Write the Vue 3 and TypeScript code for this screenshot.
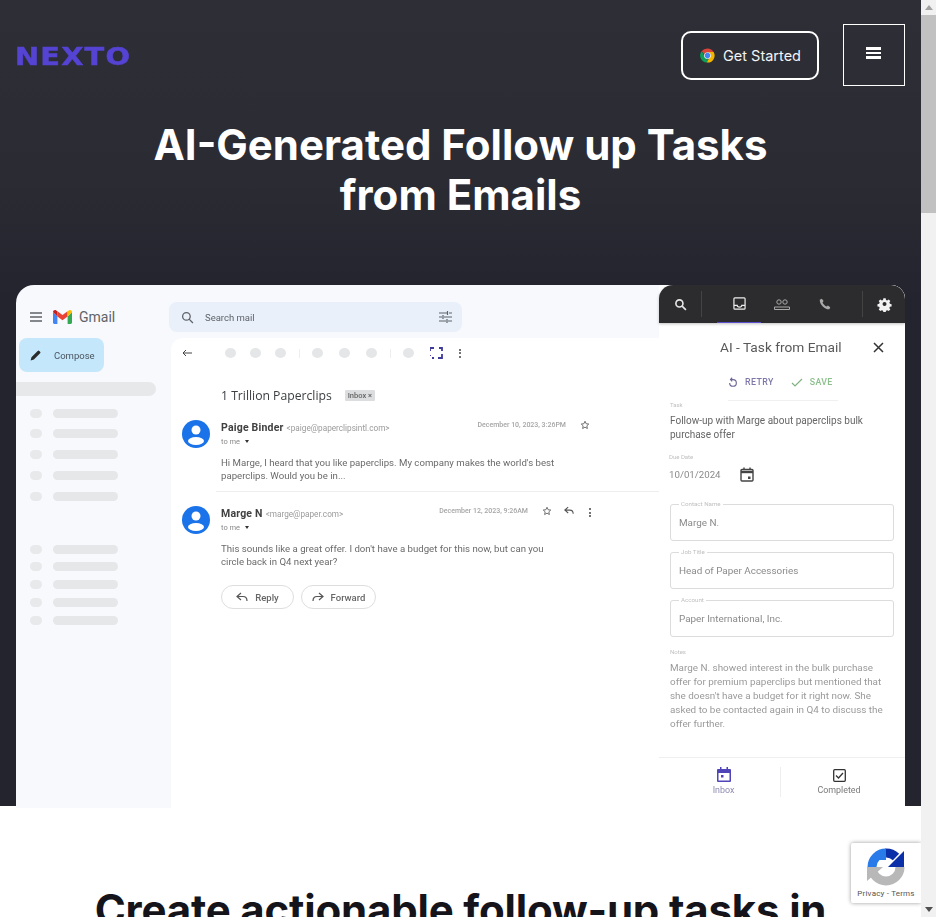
<script setup lang="ts">
const topRows = [0, 1, 2, 3, 4]
const lowerRows = [0, 1, 2, 3, 4]
const fields = [
  { label: 'Contact Name', value: 'Marge N.' },
  { label: 'Job Title', value: 'Head of Paper Accessories' },
  { label: 'Account', value: 'Paper International, Inc.' },
]
const notes = [
  'Marge N. showed interest in the bulk purchase',
  'offer for premium paperclips but mentioned that',
  "she doesn't have a budget for it right now. She",
  'asked to be contacted again in Q4 to discuss the',
  'offer further.',
]
</script>

<template>
  <div class="window">
    <div class="page">
      <section class="hero">
        <header class="nav">
          <span class="logo">NEXTO</span>
          <a class="cta">
            <svg class="chrome" viewBox="0 0 48 48" width="17" height="17">
              <path fill="#db4437" d="M24 4a20 20 0 0 1 17.3 10H24a10 10 0 0 0-9.5 6.9L7.7 11.3A20 20 0 0 1 24 4z" />
              <path fill="#0f9d58" d="M7.7 11.3l8.6 15.4A10 10 0 0 0 28 33.4L21.6 43.9A20 20 0 0 1 7.7 11.3z" />
              <path fill="#f4b400" d="M41.3 14A20 20 0 0 1 21.6 43.9L30.2 29A10 10 0 0 0 31 17l-7-3z" />
              <circle cx="24" cy="24" r="9.5" fill="#fff" />
              <circle cx="24" cy="24" r="7.5" fill="#4285f4" />
            </svg>
            Get Started
          </a>
          <button class="menu" aria-label="Menu"><i></i><i></i><i></i></button>
        </header>
        <h1>AI-Generated Follow up Tasks<br />from Emails</h1>

        <div class="shot">
          <aside class="side">
            <div class="brand">
              <svg width="12" height="10" viewBox="0 0 12 10"><path d="M0 1h12M0 5h12M0 9h12" stroke="#5f6368" stroke-width="1.3" /></svg>
              <svg class="gm" width="19" height="14" viewBox="0 0 19 14">
                <path fill="#4285f4" d="M0 2v10.6c0 .8.6 1.4 1.4 1.4h3V6.5z" />
                <path fill="#34a853" d="M14.6 6.5V14h3c.8 0 1.4-.6 1.4-1.4V2z" />
                <path fill="#ea4335" d="M4.4 6.5V1.2L9.5 5l5.1-3.8v5.3L9.5 10.2z" />
                <path fill="#c5221f" d="M0 2c0-1.6 1.9-2.6 3.2-1.6l1.2.8v5.3z" />
                <path fill="#fbbc04" d="M14.6 1.2l1.2-.8C17.1-.6 19 .4 19 2l-4.4 4.5z" />
              </svg>
              <span>Gmail</span>
            </div>
            <div class="compose">
              <svg width="13" height="13" viewBox="0 0 24 24"><path fill="#2b2b2b" d="M3 21l1.5-6L16 3.5a2.1 2.1 0 0 1 3 0l1.5 1.5a2.1 2.1 0 0 1 0 3L9 19.5z" /></svg>
              <span>Compose</span>
            </div>
            <div class="wide-pill"></div>
            <div class="rows">
              <div v-for="r in topRows" :key="r" class="row"><i></i><b></b></div>
            </div>
            <div class="rows lower">
              <div v-for="r in lowerRows" :key="r" class="row"><i></i><b></b></div>
            </div>
          </aside>

          <div class="center">
            <div class="search">
              <svg width="13" height="13" viewBox="0 0 24 24" fill="none" stroke="#5f6368" stroke-width="2.4"><circle cx="10" cy="10" r="7" /><path d="M15 15l7 7" /></svg>
              <span>Search mail</span>
              <svg class="tune" width="13" height="12" viewBox="0 0 13 12" fill="none" stroke="#5f6368" stroke-width="1.2"><path d="M0 2h8M10 2h3M8.5 0v4M0 6h3M5 6h8M4 4v4M0 10h7M9 10h4M8 8v4" /></svg>
            </div>
            <main class="mail">
              <div class="toolbar">
                <svg class="back" width="10" height="8" viewBox="0 0 10 8" fill="none" stroke="#444" stroke-width="1"><path d="M10 4H1M4 1L1 4l3 3" /></svg>
                <span class="tool-dots one"><i></i><i></i><i></i></span>
                <span class="tool-sep"></span>
                <span class="tool-dots two"><i></i><i></i><i></i></span>
                <span class="tool-sep"></span>
                <span class="tool-dots"><i></i></span>
                <svg class="focus" width="13" height="12" viewBox="0 0 13 12" fill="none" stroke="#3f3a9e" stroke-width="1.8"><path d="M0 4V1h4M9 1h3v3M12 7v4H8M4 11H2M0 9V8" /></svg>
                <span class="kebab"><i></i><i></i><i></i></span>
              </div>
              <div class="subject">
                <span>1 Trillion Paperclips</span>
                <em>Inbox ×</em>
              </div>

              <article class="email">
                <svg class="avatar" viewBox="0 0 28 28" width="28" height="28">
                  <circle cx="14" cy="14" r="14" fill="#1a73e8" />
                  <circle cx="14" cy="10" r="4.5" fill="#fff" />
                  <ellipse cx="14" cy="21" rx="8" ry="4" fill="#fff" />
                </svg>
                <div class="msg">
                  <div class="head">
                    <strong>Paige Binder</strong>
                    <span class="addr">&lt;paige@paperclipsintl.com&gt;</span>
                    <span class="date">December 10, 2023, 3:26PM</span>
                    <svg class="ic star-last" width="10" height="10" viewBox="0 0 24 24" fill="none" stroke="#555" stroke-width="2"><path d="M12 3l2.8 6 6.2.7-4.6 4.300 1.300 6.500L12 17.200 6.300 20.500 7.600 14 3 9.700 9.200 9z" /></svg>
                  </div>
                  <div class="to">to me <i></i></div>
                  <p>Hi Marge, I heard that you like paperclips. My company makes the world's best<br />paperclips. Would you be in...</p>
                </div>
              </article>
              <div class="rule"></div>
              <article class="email second">
                <svg class="avatar" viewBox="0 0 28 28" width="28" height="28">
                  <circle cx="14" cy="14" r="14" fill="#1a73e8" />
                  <circle cx="14" cy="10" r="4.5" fill="#fff" />
                  <ellipse cx="14" cy="21" rx="8" ry="4" fill="#fff" />
                </svg>
                <div class="msg">
                  <div class="head">
                    <strong>Marge N</strong>
                    <span class="addr">&lt;marge@paper.com&gt;</span>
                    <span class="date">December 12, 2023, 9:26AM</span>
                    <span class="actions">
                      <svg class="ic" width="10" height="10" viewBox="0 0 24 24" fill="none" stroke="#555" stroke-width="2"><path d="M12 3l2.8 6 6.2.7-4.6 4.300 1.300 6.500L12 17.200 6.300 20.500 7.600 14 3 9.700 9.200 9z" /></svg>
                      <svg class="ic" width="10" height="9" viewBox="0 0 12 10" fill="none" stroke="#555" stroke-width="1.3"><path d="M5 1L1 4.500 5 8M1 4.500h6c2.500 0 4 1.500 4 4.500" /></svg>
                      <span class="kebab small"><i></i><i></i><i></i></span>
                    </span>
                  </div>
                  <div class="to">to me <i></i></div>
                  <p>This sounds like a great offer. I don't have a budget for this now, but can you<br />circle back in Q4 next year?</p>
                  <div class="replies">
                    <span class="pill reply">
                      <svg width="12" height="10" viewBox="0 0 12 10" fill="none" stroke="#555" stroke-width="1.2"><path d="M5 1L1 4.500 5 8M1 4.500h6c2.500 0 4 1.500 4 4.500" /></svg>
                      Reply
                    </span>
                    <span class="pill forward">
                      <svg width="12" height="10" viewBox="0 0 12 10" fill="none" stroke="#555" stroke-width="1.2"><path d="M7 1l4 3.500L7 8M11 4.500H5C2.500 4.500 1 6 1 9" /></svg>
                      Forward
                    </span>
                  </div>
                </div>
              </article>
            </main>
          </div>

          <div class="panel">
            <div class="bar">
              <svg class="bar-search" width="13" height="13" viewBox="0 0 24 24" fill="none" stroke="#e6e6e6" stroke-width="3"><circle cx="10" cy="10" r="6.5" /><path d="M15 15l7 7" /></svg>
              <span class="bar-sep"></span>
              <span class="tab active">
                <svg width="13" height="13" viewBox="0 0 14 14" fill="none" stroke="#ededed" stroke-width="1.3"><rect x="1" y="1" width="12" height="12" rx="1" /><path d="M1 9h3.500a2.500 2 0 0 0 5 0H13" /></svg>
              </span>
              <span class="tab">
                <svg width="16" height="11" viewBox="0 0 16 11" fill="none" stroke="#a9a9a9" stroke-width="1"><circle cx="5" cy="3" r="2.2" /><circle cx="11" cy="3" r="2.2" /><path d="M.5 10.500V8h15v2.500z" /></svg>
              </span>
              <span class="tab">
                <svg width="14" height="14" viewBox="0 0 24 24" fill="#a9a9a9"><path d="M6.600 3l3 4-1.800 2.600c1.300 2.800 3.700 5.200 6.600 6.600l2.600-1.800 4 3-1.500 3.600C11.500 21.500 2.500 12.500 3 4.500z" /></svg>
              </span>
              <span class="bar-sep right"></span>
              <svg width="15" height="15" viewBox="0 0 24 24"><path fill="#f2f2f2" fill-rule="evenodd" d="M10 2h4l.6 3 2 .9 2.700-1.600 2.800 2.800-1.700 2.600.9 2.100 3 .6v4l-3 .6-.9 2.100 1.700 2.600-2.800 2.800-2.700-1.600-2 .9-.6 3h-4l-.6-3-2-.9-2.700 1.600-2.800-2.800 1.700-2.600-.9-2.100-3-.6v-4l3-.6.900-2.100L1.900 7.100l2.800-2.800 2.700 1.600 2-.9zM12 8.500a3.500 3.500 0 1 0 0 7 3.500 3.500 0 0 0 0-7z" transform="matrix(.92 0 0 .92 1 0)" /></svg>
            </div>
            <div class="title">
              <span>AI - Task from Email</span>
              <svg width="11" height="11" viewBox="0 0 11 11" stroke="#333" stroke-width="1.5"><path d="M1 1l9 9M10 1l-9 9" /></svg>
            </div>
            <div class="task-actions">
              <span class="retry">
                <svg width="10" height="11" viewBox="0 0 12 13" fill="none" stroke="#6d6896" stroke-width="1.4"><path d="M2 7a4 4 0 1 0 4-4H3M5 .8L3 3l2 2.200" /></svg>
                RETRY
              </span>
              <span class="save">
                <svg width="12" height="9" viewBox="0 0 12 9" fill="none" stroke="#7fb27f" stroke-width="1.2"><path d="M1 5l3 3 7-7" /></svg>
                SAVE
              </span>
            </div>
            <div class="faint-rule"></div>
            <div class="small-label">Task</div>
            <div class="task-text">Follow-up with Marge about paperclips bulk<br />purchase offer</div>
            <div class="small-label due">Due Date</div>
            <div class="date-row">
              <span>10/01/2024</span>
              <svg width="14" height="15" viewBox="0 0 14 15" fill="none"><rect x="1" y="2.500" width="12" height="11.500" rx="1" stroke="#444" stroke-width="1.4" /><path d="M1 5h12" stroke="#444" stroke-width="2.4" /><path d="M4 .5v2M10 .5v2" stroke="#444" stroke-width="1.4" /><rect x="8" y="9.500" width="2.500" height="2.500" fill="#444" /></svg>
            </div>
            <fieldset v-for="f in fields" :key="f.label" class="field">
              <legend>{{ f.label }}</legend>
              <span>{{ f.value }}</span>
            </fieldset>
            <div class="small-label notes-label">Notes</div>
            <div class="notes">
              <div v-for="n in notes" :key="n">{{ n }}</div>
            </div>
            <nav class="foot">
              <span class="foot-item inbox">
                <svg width="14" height="15" viewBox="0 0 14 15" fill="#4f45b8"><path d="M3 0h1.500v2h5V0H11v2h2a1 1 0 0 1 1 1v11a1 1 0 0 1-1 1H1a1 1 0 0 1-1-1V3a1 1 0 0 1 1-1h2zM1.500 6v7.500h11V6z" /><rect x="4" y="8" width="2.500" height="2.500" /></svg>
                Inbox
              </span>
              <span class="foot-item done">
                <svg width="13" height="13" viewBox="0 0 13 13" fill="none" stroke="#333" stroke-width="1.3"><rect x=".7" y=".7" width="11.600" height="11.600" rx="1" /><path d="M3 6.500l2.500 2.500L10 4" /></svg>
                Completed
              </span>
            </nav>
          </div>
        </div>
      </section>

      <section class="lead">
        <h2>Create actionable follow-up tasks in</h2>
      </section>

      <div class="recaptcha">
        <svg width="38" height="38" viewBox="0 0 38 38" fill="none">
          <path d="M5 19a14 14 0 0 0 28 0" stroke="#b8b8b8" stroke-width="9" />
          <path d="M0 19h16L0 33z" fill="#b8b8b8" />
          <path d="M5 19A14 14 0 0 1 19 5" stroke="#2a7bea" stroke-width="9" />
          <path d="M19 0v12H8z" fill="#2a7bea" />
          <path d="M19 5a14 14 0 0 1 10 4" stroke="#0b2fa8" stroke-width="9" />
          <path d="M37 3v16H21z" fill="#0b2fa8" />
        </svg>
        <span>Privacy - Terms</span>
      </div>
    </div>

    <div class="scrollbar">
      <span class="arrow up"></span>
      <span class="thumb"></span>
      <span class="arrow down"></span>
    </div>
  </div>
</template>

<style>
html,
body {
  margin: 0;
  overflow: hidden;
}
</style>

<style scoped>
.window {
  display: flex;
  width: 936px;
  height: 917px;
  overflow: hidden;
  font-family: Inter, "Liberation Sans", sans-serif;
}
.page {
  position: relative;
  width: 921px;
  flex: none;
  overflow: hidden;
  background: #fff;
}
.scrollbar {
  width: 15px;
  flex: none;
  background: #f1f1f1;
  display: flex;
  flex-direction: column;
  align-items: center;
}
.arrow {
  width: 0;
  height: 0;
  border-left: 4px solid transparent;
  border-right: 4px solid transparent;
}
.arrow.up {
  margin-top: 5px;
  border-bottom: 5px solid #a3a3a3;
}
.arrow.down {
  margin-top: auto;
  margin-bottom: 5px;
  border-top: 5px solid #505050;
}
.thumb {
  width: 15px;
  height: 198px;
  margin-top: 5px;
  background: #c1c1c1;
}

.hero {
  height: 806px;
  box-sizing: border-box;
  padding: 24px 16px 0;
  background: linear-gradient(#2e2e36 0, #2b2b33 180px, #24242f 300px);
}
.nav {
  display: flex;
  align-items: center;
  height: 62px;
}
.logo {
  margin: 4px 0 0 -1px;
  font-family: "DejaVu Sans", sans-serif;
  font-weight: 700;
  font-size: 24px;
  letter-spacing: 1px;
  line-height: 18px;
  color: #5543d3;
  -webkit-text-stroke: 0.5px #5543d3;
  transform: scaleX(1.2);
  transform-origin: left center;
  filter: blur(0.4px);
}
.cta {
  display: flex;
  align-items: center;
  gap: 7px;
  box-sizing: border-box;
  width: 138px;
  height: 49px;
  margin: 1px 24px 0 auto;
  padding-left: 16px;
  border: 2px solid #fff;
  border-radius: 10px;
  color: #f4f4f4;
  font-size: 14.5px;
  font-weight: 400;
}
.menu {
  display: flex;
  flex-direction: column;
  align-items: center;
  justify-content: center;
  gap: 2px;
  box-sizing: border-box;
  width: 62px;
  height: 62px;
  padding: 0 1px 4px 0;
  background: none;
  border: 1px solid #fff;
}
.menu i {
  display: block;
  width: 15px;
  height: 2.5px;
  background: #fff;
}
h1 {
  margin: 34px 0 0;
  font-size: 42px;
  line-height: 50px;
  font-weight: 700;
  text-align: center;
  color: #fff;
}

.shot {
  display: grid;
  grid-template-columns: 153px 490px 246px;
  height: 523px;
  margin-top: 65px;
  position: relative;
  background: #f7f9fd;
  border-radius: 18px 14px 0 0;
  overflow: hidden;
  font-family: Roboto, "Liberation Sans", sans-serif;
  filter: blur(0.45px);
}

.side {
  padding-top: 25px;
}
.brand {
  display: flex;
  align-items: center;
  height: 14px;
  margin-left: 14px;
  font-size: 14px;
  color: #5f6368;
}
.gm {
  margin: 0 7px 0 11px;
}
.compose {
  display: flex;
  align-items: center;
  gap: 12px;
  width: 85px;
  height: 34px;
  box-sizing: border-box;
  margin: 14px 0 0 3px;
  padding-left: 10px;
  background: #c4e7fb;
  border-radius: 8px;
  font-size: 9.5px;
  color: #49555f;
}
.wide-pill {
  width: 140px;
  height: 14px;
  margin-top: 10px;
  background: #e7e8e9;
  border-radius: 0 7px 7px 0;
}
.rows {
  display: flex;
  flex-direction: column;
  gap: 11.75px;
  margin: 12.5px 0 0 14px;
}
.rows.lower {
  gap: 8.75px;
  margin-top: 44px;
}
.row {
  display: flex;
  gap: 11px;
}
.row i {
  width: 12px;
  height: 9px;
  background: #e8e9ea;
  border-radius: 5px;
}
.row b {
  width: 65px;
  height: 9px;
  background: #e6e7e8;
  border-radius: 5px;
}

.center {
  padding-top: 17px;
}
.search {
  display: flex;
  align-items: center;
  width: 293px;
  height: 30px;
  box-sizing: border-box;
  padding: 0 10px 0 12px;
  background: #e9f0fa;
  border-radius: 8px;
  font-size: 9.5px;
  color: #5f6368;
}
.search span {
  margin-left: 11px;
}
.tune {
  margin-left: auto;
}
.mail {
  height: 480px;
  margin: 6px 0 0 2px;
  padding: 10px 0 0 11px;
  background: #fff;
  border-radius: 12px 0 0 0;
}
.toolbar {
  display: flex;
  align-items: center;
  height: 10px;
}
.back {
  margin-right: 33px;
}
.tool-dots {
  display: flex;
  gap: 14px;
}
.tool-dots.two {
  gap: 16px;
}
.tool-dots i {
  width: 11px;
  height: 10px;
  background: #e5e6e7;
  border-radius: 50%;
}
.tool-sep {
  width: 1px;
  height: 9px;
  margin: 0 12.5px;
  background: #eee;
}
.focus {
  margin: 0 0 0 16px;
}
.kebab {
  display: flex;
  flex-direction: column;
  gap: 1.5px;
  margin-left: 16px;
}
.kebab i {
  width: 2px;
  height: 2px;
  background: #444;
  border-radius: 50%;
}
.kebab.small {
  width: 10px;
  margin: 0;
  align-items: center;
}
.subject {
  display: flex;
  align-items: center;
  height: 20px;
  margin: 27px 0 0 39px;
  font-family: "Open Sans", sans-serif;
  font-size: 12.2px;
  color: #3c4043;
}
.subject em {
  margin-left: 13px;
  padding: 1px 3px;
  background: #dcdddf;
  border-radius: 1px;
  font-family: Roboto, sans-serif;
  font-style: normal;
  font-size: 7.5px;
  font-weight: 500;
  color: #666;
}
.email {
  display: flex;
  gap: 11px;
  margin-top: 15px;
}
.email.second {
  margin-top: 14px;
}
.avatar {
  flex: none;
  margin-top: 0;
}
.msg {
  width: 374px;
}
.head {
  display: flex;
  align-items: flex-start;
  margin-top: 2px;
  height: 12px;
  line-height: 12px;
}
.head strong {
  font-size: 10.5px;
  font-weight: 700;
  color: #404040;
  letter-spacing: 0.2px;
}
.addr {
  margin-left: 3px;
  font-size: 8.2px;
  color: #9a9a9a;
}
.date {
  margin: -3px 14px 0 auto;
  font-size: 7px;
  font-weight: 500;
  color: #a5a5a5;
}
.ic {
  flex: none;
  margin-top: -2px;
}
.star-last {
  margin-right: 5px;
}
.actions {
  display: flex;
  align-items: flex-start;
  gap: 11.5px;
}
.to {
  display: flex;
  align-items: center;
  gap: 5px;
  height: 12px;
  margin-top: 1px;
  font-size: 7.5px;
  color: #8a8a8a;
}
.to i {
  width: 0;
  height: 0;
  border-left: 2.5px solid transparent;
  border-right: 2.5px solid transparent;
  border-top: 3px solid #333;
}
.msg p {
  margin: 9px 0 0;
  font-size: 9.65px;
  line-height: 13px;
  color: #6a6a6a;
  white-space: nowrap;
}
.rule {
  height: 1px;
  margin: 9px 0 0 34px;
  background: #eeeeee;
}
.replies {
  display: flex;
  gap: 7px;
  margin-top: 17px;
}
.pill {
  display: flex;
  align-items: center;
  justify-content: center;
  gap: 7px;
  height: 24px;
  box-sizing: border-box;
  border: 1px solid #dedede;
  border-radius: 12px;
  font-size: 9.5px;
  font-weight: 500;
  color: #666;
}
.pill.reply {
  width: 73px;
}
.pill.forward {
  width: 75px;
}

.panel {
  display: flex;
  flex-direction: column;
  background: #fff;
  color: #666;
}
.bar {
  display: flex;
  align-items: center;
  height: 38px;
  flex: none;
  box-sizing: border-box;
  padding-left: 15px;
  background: #2c2c2e;
  border-radius: 14px 14px 0 0;
  box-shadow: 0 1px 3px rgba(0, 0, 0, 0.25);
  position: relative;
}
.bar-sep {
  width: 1px;
  height: 26px;
  margin: 0 15px 0 14px;
  background: #444;
}
.bar-sep.right {
  margin: 0 14px 0 16px;
}
.tab {
  display: flex;
  align-items: center;
  justify-content: center;
  width: 44px;
  height: 38px;
  box-sizing: border-box;
  margin-right: -1px;
}
.tab.active {
  border-bottom: 1px solid #5a4fcf;
}
.title {
  display: flex;
  align-items: center;
  margin: 16px 0 0 61px;
  height: 16px;
  font-size: 13.7px;
  color: #595959;
}
.title svg {
  margin-left: 31px;
}
.task-actions {
  display: flex;
  align-items: center;
  gap: 17px;
  height: 12px;
  margin: 21px 0 0 69px;
  font-size: 8.8px;
  font-weight: 500;
  letter-spacing: 0.4px;
}
.retry,
.save {
  display: flex;
  align-items: center;
  gap: 7px;
}
.retry {
  color: #7d78a8;
}
.save {
  color: #8cc08c;
}
.faint-rule {
  width: 110px;
  height: 1px;
  margin: 12px 0 0 69px;
  background: #f0f0f0;
}
.small-label {
  height: 8px;
  margin: 0 0 0 11px;
  font-size: 6px;
  line-height: 8px;
  color: #c0c0c0;
}
.small-label.due {
  margin: 11px 0 0 10px;
}
.task-text {
  margin: 5px 0 0 11px;
  font-size: 10px;
  line-height: 14px;
  color: #666;
}
.date-row {
  display: flex;
  align-items: center;
  gap: 19px;
  height: 16px;
  margin: 5px 0 0 10px;
  font-size: 9.7px;
  color: #8a8a8a;
}
.field {
  display: block;
  width: 224px;
  box-sizing: border-box;
  height: 40px;
  min-width: 0;
  margin: 19px 0 0 11px;
  padding: 0 0 0 8px;
  border: 1px solid #dcdcdc;
  border-radius: 3px;
  font-size: 9.9px;
  color: #8a8a8a;
}
.field + .field {
  margin-top: 8px;
}
.field legend {
  padding: 0 2px;
  height: 7px;
  line-height: 7px;
  font-size: 6.2px;
  color: #c0c0c0;
}
.field span {
  display: block;
  margin-top: 8px;
  line-height: 14px;
}
.small-label.notes-label {
  margin: 11px 0 0 11px;
}
.notes {
  margin: 5px 0 0 11px;
  font-size: 9.9px;
  line-height: 14px;
  color: #9a9a9a;
  white-space: nowrap;
}
.foot {
  display: flex;
  flex: none;
  height: 45px;
  margin-top: 26px;
  padding-top: 9px;
  border-top: 1px solid #efefef;
}
.foot-item {
  display: flex;
  flex-direction: column;
  align-items: center;
  justify-content: flex-start;
  gap: 3px;
  height: 30px;
  font-size: 8.9px;
}
.inbox {
  width: 122px;
  box-sizing: border-box;
  padding-left: 8px;
  color: #8e8cb2;
  border-right: 1px solid #efefef;
}
.done {
  flex: 1;
  padding: 2px 8px 0 0;
  color: #7a7a7a;
}

.lead {
  padding-top: 79px;
}
h2 {
  margin: 0;
  font-size: 42px;
  line-height: 50px;
  font-weight: 700;
  letter-spacing: -0.18px;
  text-align: center;
  color: #14141a;
  white-space: nowrap;
}

.recaptcha {
  position: absolute;
  left: 851px;
  top: 843px;
  display: flex;
  flex-direction: column;
  align-items: center;
  width: 70px;
  height: 60px;
  box-sizing: border-box;
  padding-top: 5px;
  background: #fff;
  border-radius: 2px 0 0 2px;
  box-shadow: 0 0 4px rgba(0, 0, 0, 0.4);
  font-family: Roboto, "Liberation Sans", sans-serif;
}
.recaptcha span {
  margin-top: 3px;
  font-size: 8px;
  letter-spacing: 0.2px;
  color: #555;
  white-space: nowrap;
}
</style>
